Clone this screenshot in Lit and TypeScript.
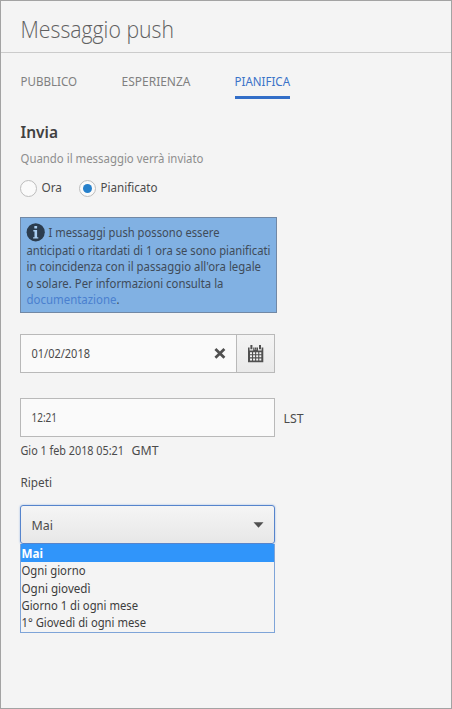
import { LitElement, html, css, svg } from "lit";
import { customElement, property, state } from "lit/decorators.js";
import { classMap } from "lit/directives/class-map.js";

/** One line of text set to a fixed measure; colour and weight are inherited. */
@customElement("text-line")
class TextLine extends LitElement {
  @property() text = "";
  @property({ type: Number }) measure = 50;
  @property({ type: Number }) size = 13;

  static styles = css`
    :host { display: block; flex: none; height: 17px; }
    svg { display: block; overflow: visible; }
    text { fill: currentColor; white-space: pre; }
  `;

  render() {
    return html`<svg width=${this.measure} height="17">
      ${svg`<text x="0.5" y="13" font-size=${this.size} textLength=${this.measure} lengthAdjust="spacingAndGlyphs">${this.text}</text>`}
    </svg>`;
  }
}

@customElement("app-root")
class AppRoot extends LitElement {
  @state() tab = "PIANIFICA";
  @state() mode = "Pianificato";
  @state() repeat = "Mai";

  static styles = css`
    :host {
      display: block;
      box-sizing: border-box;
      height: 709px;
      border: 1px solid #a3a3a3;
      background: #f4f4f4;
      color: #4b4b4b;
      font-family: "Noto Sans", "Open Sans", sans-serif;
      overflow: hidden;
    }
    header {
      height: 51px;
      box-sizing: content-box;
      border-bottom: 1px solid #cbcbcb;
      padding-left: 19px;
      display: flex;
      align-items: flex-start;
      color: #606060;
      font-family: "Open Sans", "Noto Sans", sans-serif;
      font-weight: 300;
    }
    header text-line { margin-top: 24px; }
    main { padding-left: 19px; display: flex; flex-direction: column; align-items: flex-start; }
    nav { display: flex; padding-top: 20px; color: #808080; }
    .tab { padding-bottom: 6px; border-bottom: 3px solid transparent; margin-right: 44.5px; cursor: pointer; }
    .tab.active { color: #3a72c8; border-color: #326ec8; }
    .tab.active text-line { margin-left: -0.5px; }
    .heading { margin-top: 26px; font-weight: 600; color: #414141; }
    .hint { margin-top: 8px; color: #8e8e8e; }
    .radios { display: flex; margin-top: 13px; height: 17px; }
    .radio { display: flex; cursor: pointer; margin-right: 17px; }
    .radio text-line { margin: -1px 0 0 4.2px; }
    .dot {
      box-sizing: border-box;
      width: 17px;
      height: 17px;
      border: 1px solid #bdbdbd;
      border-radius: 50%;
      background: #fafafa;
      display: grid;
      place-items: center;
    }
    .dot.on::after { content: ""; width: 9px; height: 9px; border-radius: 50%; background: #2680cb; }
    .alert {
      box-sizing: border-box;
      width: 257px;
      height: 96px;
      margin-top: 20px;
      padding: 5px 0 0 5px;
      border: 1px solid #7188a5;
      background: #81b1e3;
      color: #3f4b59;
    }
    .row { display: flex; height: 16.25px; }
    .row.first { height: 19px; padding-top: 0; }
    .row.first text-line { margin: 1px 0 0 3px; }
    .info { display: block; }
    .link { color: #4a80cf; }
    .field {
      box-sizing: border-box;
      width: 255px;
      height: 39px;
      border: 1px solid #b9b9b9;
      background: #fafafa;
      display: flex;
      padding-left: 10px;
    }
    .field text-line { margin-top: 10px; }
    .date { margin-top: 21px; }
    .clear { margin: 12px 10px 0 auto; }
    .calendar {
      width: 37px;
      border-left: 1px solid #b9b9b9;
      background: linear-gradient(#f4f4f4, #e9e9e9);
      display: flex;
      justify-content: center;
      padding-top: 9px;
      box-sizing: content-box;
      height: 28px;
    }
    .time { display: flex; margin-top: 25px; }
    .time > text-line { margin: 12px 0 0 7.5px; }
    .stamp { display: flex; gap: 7px; margin-top: 5px; }
    .label { margin-top: 15px; }
    .select {
      box-sizing: border-box;
      width: 255px;
      height: 39px;
      margin-top: 14px;
      border: 1px solid #5684cc;
      border-radius: 3px;
      box-shadow: 0 0 2px #8fb0e0;
      background: linear-gradient(#f5f5f5, #e7e7e7);
      display: flex;
      justify-content: space-between;
      padding: 0 10px;
    }
    .select text-line { margin-top: 11px; }
    .arrow { margin-top: 16px; }
    .options {
      box-sizing: border-box;
      width: 255px;
      height: 89px;
      border: 1px solid #7ea4d8;
      border-top: 0;
      color: #3d3d3d;
      background: #f4f4f4;
    }
    .option { height: 17.3px; box-sizing: border-box; padding-top: 0.3px; cursor: pointer; }
    .option.selected { height: 18px; padding-top: 0.7px; background: #3095fa; color: #fff; font-weight: 700; }
  `;

  render() {
    const line = (text: string, measure: number, size = 13, cls = "") =>
      html`<text-line class=${cls} .text=${text} .measure=${measure} .size=${size}></text-line>`;
    const tabs: [string, number][] = [["PUBBLICO", 56.5], ["ESPERIENZA", 69], ["PIANIFICA", 55.5]];
    const modes: [string, number][] = [["Ora", 20.5], ["Pianificato", 57]];
    const options: [string, number][] = [
      ["Mai", 21.5],
      ["Ogni giorno", 64],
      ["Ogni giovedì", 69],
      ["Giorno 1 di ogni mese", 116.5],
      ["1° Giovedì di ogni mese", 124.5],
    ];
    return html`
      <header>${line("Messaggio push", 153.5, 23.5)}</header>
      <main>
        <nav>
          ${tabs.map(([t, w]) => html`<div
            class=${classMap({ tab: true, active: t === this.tab })}
            @click=${() => (this.tab = t)}>${line(t, w)}</div>`)}
        </nav>
        ${line("Invia", 37.5, 16.5, "heading")}
        ${line("Quando il messaggio verrà inviato", 183, 13.2, "hint")}
        <div class="radios">
          ${modes.map(([t, w]) => html`<div class="radio" @click=${() => (this.mode = t)}>
            <span class=${classMap({ dot: true, on: t === this.mode })}></span>${line(t, w)}
          </div>`)}
        </div>
        <div class="alert">
          <div class="row first">
            <svg class="info" width="19" height="19" viewBox="0 0 19 19">
              <circle cx="9.7" cy="9.3" r="9.1" fill="#2b3c4e" />
              <rect x="8.3" y="3" width="2.8" height="2.4" rx=".5" fill="#a9cdf0" />
              <path d="M7.3 7h3.8v7.2h1.2v1.4H7.1v-1.4h1.4V8.4H7.3z" fill="#a9cdf0" />
            </svg>
            ${line("I messaggi push possono essere", 171)}
          </div>
          <div class="row">${line("anticipati o ritardati di 1 ora se sono pianificati", 244)}</div>
          <div class="row">${line("in coincidenza con il passaggio all'ora legale", 234.5)}</div>
          <div class="row">${line("o solare. Per informazioni consulta la", 197)}</div>
          <div class="row">${line("documentazione", 90, 13, "link")}${line(".", 3)}</div>
        </div>
        <div class="field date">
          ${line("01/02/2018", 58.5, 13.4)}
          <svg class="clear" width="12" height="13" viewBox="0 0 12 13">
            <path d="M1.4 2l9 8.8M10.4 2l-9 8.8" stroke="#505050" stroke-width="2.7" />
          </svg>
          <div class="calendar">
            <svg width="17" height="19" viewBox="0 0 17 19">
              <path fill="#505050" d="M1 3.4h1.6v3h3.6v-3h1v2.4h2.7V3.4h1.1v3h3.6v-3h1.7v14.8H1z" />
              <path fill="#505050" d="M3.4 1h2v4.2h-2zM7.6 3.4h2v2.4h-2zM12 1h2v4.2h-2z" />
              <path fill="#f4f4f4" d="M3 8.2h2v2H3zM6.1 8.2h2v2h-2zM9.2 8.2h2v2h-2zM12.3 8.2h2v2h-2zM3 11.3h2v2H3zM6.1 11.3h2v2h-2zM9.2 11.3h2v2h-2zM12.3 11.3h2v2h-2zM3 14.4h2v2H3zM6.1 14.4h2v2h-2zM9.2 14.4h2v2h-2zM12.3 14.4h2v2h-2z" />
            </svg>
          </div>
        </div>
        <div class="time">
          <div class="field">${line("12:21", 25.5)}</div>
          ${line("LST", 20)}
        </div>
        <div class="stamp">${line("Gio 1 feb 2018 05:21", 103.5)}${line("GMT", 27)}</div>
        ${line("Ripeti", 31.5, 13, "label")}
        <div class="select">
          ${line(this.repeat, 21.5)}
          <svg class="arrow" width="11" height="6" viewBox="0 0 11 6">
            <path d="M.5.3h10L5.5 5.8z" fill="#505050" />
          </svg>
        </div>
        <div class="options">
          ${options.map(([t, w]) => html`<div
            class=${classMap({ option: true, selected: t === this.repeat })}
            @click=${() => (this.repeat = t)}>${line(t, w)}</div>`)}
        </div>
      </main>
    `;
  }
}
